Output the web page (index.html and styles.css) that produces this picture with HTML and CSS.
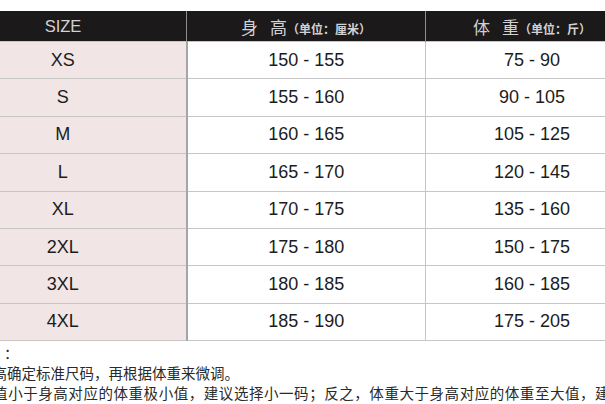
FILE: index.html
```html
<!DOCTYPE html>
<html lang="zh">
<head>
<meta charset="utf-8">
<link rel="stylesheet" href="styles.css">
</head>
<body>
<div class="page">
  <table class="size-table">
    <thead>
      <tr>
        <th class="col-size">SIZE</th>
        <th class="col-h"><span class="big">身</span><span class="big gap">高</span><span class="unit">（单位：厘米）</span></th>
        <th class="col-w"><span class="big">体</span><span class="big gap">重</span><span class="unit">（单位：斤）</span></th>
      </tr>
    </thead>
    <tbody>
      <tr><td class="col-size">XS</td><td>150 - 155</td><td>75 - 90</td></tr>
      <tr><td class="col-size">S</td><td>155 - 160</td><td>90 - 105</td></tr>
      <tr><td class="col-size">M</td><td>160 - 165</td><td>105 - 125</td></tr>
      <tr><td class="col-size">L</td><td>165 - 170</td><td>120 - 145</td></tr>
      <tr><td class="col-size">XL</td><td>170 - 175</td><td>135 - 160</td></tr>
      <tr><td class="col-size">2XL</td><td>175 - 180</td><td>150 - 175</td></tr>
      <tr><td class="col-size">3XL</td><td>180 - 185</td><td>160 - 185</td></tr>
      <tr><td class="col-size">4XL</td><td>185 - 190</td><td>175 - 205</td></tr>
    </tbody>
  </table>
  <div class="notes">
    <p class="n1">说明：</p>
    <p class="n2">以身高确定标准尺码，再根据体重来微调。</p>
    <p class="n3">体重值小于身高对应的体重极小值，建议选择小一码；反之，体重大于身高对应的体重至大值，建议选择大一码。</p>
    <p class="n4">如有疑问请咨询客服。</p>
  </div>
</div>
</body>
</html>
```
FILE: styles.css
```css
html, body {
  margin: 0;
  padding: 0;
  background: #ffffff;
  overflow: hidden;
}
.page {
  width: 605px;
  height: 404px;
  overflow: hidden;
  padding-top: 11px;
  box-sizing: border-box;
  font-family: "Liberation Sans", "Noto Sans CJK SC", sans-serif;
}
.size-table {
  border-collapse: collapse;
  margin-left: -60px;
  table-layout: fixed;
  width: 696px;
}
.size-table th {
  background: #1b191a;
  color: #d2d2d2;
  font-weight: normal;
  font-size: 16.5px;
  height: 30px;
  padding: 0;
  border-left: 1.5px solid #8e8e8e;
  border-right: 1.5px solid #8e8e8e;
  white-space: nowrap;
}
.size-table th.col-size { border-left: none; }
.size-table td {
  height: 36.4px;
  padding: 0;
  text-align: center;
  font-size: 18px;
  color: #1c1c1c;
  border: 1.5px solid #c6c6c6;
}
.size-table td.col-size {
  background: #f1e5e6;
  border-left: none;
  border-right: 2px solid #a5a5a5;
}
.col-size { width: 246px; }
.col-h { width: 238px; }
.col-w { width: 212px; }
.big {
  font-family: "Noto Sans CJK SC", sans-serif;
  font-size: 17px;
  color: #d2d2d2;
}
.gap { margin-left: 12px; }
.unit {
  font-family: "Noto Sans CJK SC", sans-serif;
  font-size: 12px;
  color: #d2d2d2;
  font-weight: bold;
}
.notes {
  margin-top: 2px;
  font-family: "Noto Sans CJK SC", sans-serif;
  font-size: 14.5px;
  color: #2a2a2a;
  line-height: 20px;
  white-space: nowrap;
}
.notes p { margin: 0; }
.notes .n1 { margin-left: -33px; letter-spacing: 4px; }
.notes .n2 { margin-left: -36.5px; }
.notes .n3 { margin-left: -37px; letter-spacing: 0.55px; }
.notes .n4 { margin-left: -8px; }
```
